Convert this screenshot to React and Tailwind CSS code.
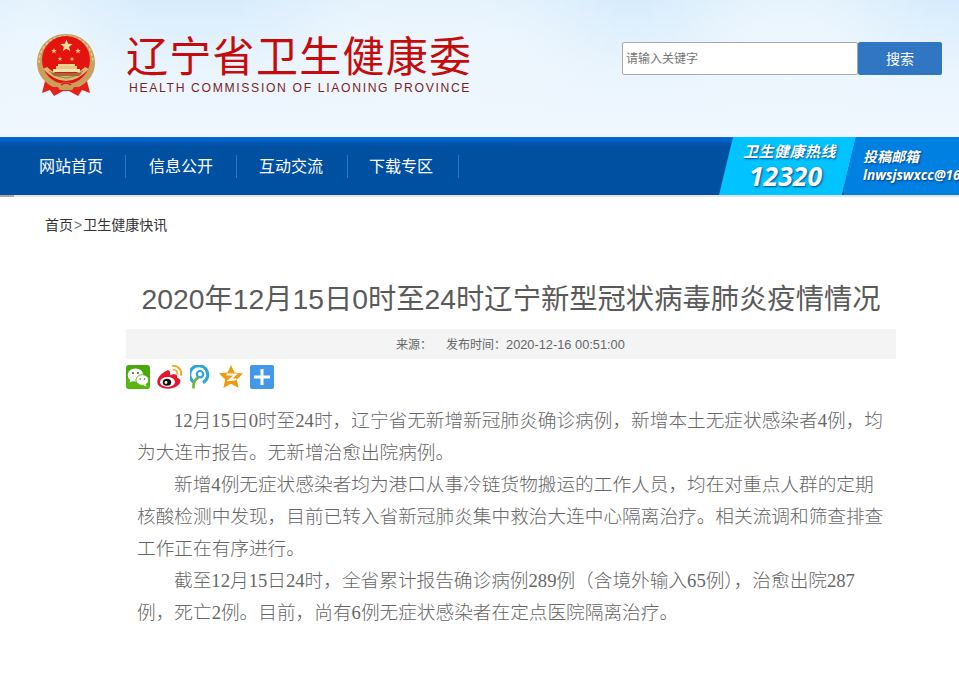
import React from 'react'

const sans = 'font-["Liberation_Sans","Noto_Sans_CJK_SC",sans-serif]'

const navItems = [
  { label: '网站首页', pad: 'pl-[24px]' },
  { label: '信息公开', pad: 'pl-[23px]' },
  { label: '互动交流', pad: 'pl-[22px]' },
  { label: '下载专区', pad: 'pl-[21px]' },
]

const paragraphs = [
  '12月15日0时至24时，辽宁省无新增新冠肺炎确诊病例，新增本土无症状感染者4例，均为大连市报告。无新增治愈出院病例。',
  '新增4例无症状感染者均为港口从事冷链货物搬运的工作人员，均在对重点人群的定期核酸检测中发现，目前已转入省新冠肺炎集中救治大连中心隔离治疗。相关流调和筛查排查工作正在有序进行。',
  '截至12月15日24时，全省累计报告确诊病例289例（含境外输入65例），治愈出院287例，死亡2例。目前，尚有6例无症状感染者在定点医院隔离治疗。',
]

function Star({ x, y, r, fill = '#f4dc9a' }) {
  const pts = []
  for (let i = 0; i < 10; i++) {
    const rad = i % 2 === 0 ? r : r * 0.42
    const a = -Math.PI / 2 + (i * Math.PI) / 5
    pts.push(`${x + rad * Math.cos(a)},${y + rad * Math.sin(a)}`)
  }
  return <polygon points={pts.join(' ')} fill={fill} />
}

function Emblem() {
  return (
    <svg width="58" height="64" viewBox="0 0 58 64" className="shrink-0">
      <path d="M9 44 L5 60 L13 57 L17 63 L26 58 L32 58 L41 63 L45 57 L53 60 L49 44 Z" fill="#e3201a" />
      <path d="M0 30 C0 14 12 1 29 1 C46 1 58 14 58 30 C58 42 50 50 42 54 L16 54 C8 50 0 42 0 30 Z" fill="#c8a05c" />
      <path d="M2 30 C2 15 13 3 29 3 C45 3 56 15 56 30" fill="none" stroke="#e6cf9a" strokeWidth="1.4" strokeDasharray="3 2" />
      <circle cx="29" cy="27" r="24" fill="#e3130f" />
      <path d="M6 36 Q29 60 52 36 L48 34 Q29 52 10 34 Z" fill="#dcb877" />
      <path d="M12 38 Q29 52 46 38" fill="none" stroke="#8f6a35" strokeWidth="0.8" />
      <Star x={29.5} y={13} r={6.5} />
      <Star x={17} y={18} r={3} fill="#ecc987" />
      <Star x={41} y={18} r={3} fill="#ecc987" />
      <Star x={23} y={26} r={2.4} fill="#ecc987" />
      <Star x={35} y={26} r={2.4} fill="#ecc987" />
      <rect x="21" y="31" width="17" height="2" fill="#f0d48c" />
      <rect x="19" y="33" width="21" height="3" fill="#e8c684" />
      <rect x="16" y="36" width="27" height="3" fill="#f4e0b0" />
      <path d="M14 40 L45 40 L42 43 L17 43 Z" fill="#9a6d32" />
      <path d="M20 53 Q29 45 38 53 L35 57 L23 57 Z" fill="#c8a05c" />
      <path d="M24 52 Q29 48 34 52" fill="none" stroke="#e3130f" strokeWidth="1.6" />
    </svg>
  )
}

function WechatIcon() {
  return (
    <svg width="24" height="24" viewBox="0 0 24 24">
      <rect width="24" height="24" rx="3" fill="#4aa80c" />
      <rect x="0.5" y="12" width="23" height="11.5" rx="3" fill="#58b811" />
      <ellipse cx="9.5" cy="10" rx="7.8" ry="6.6" fill="#fff" />
      <path d="M4.5 14 L3.5 17.5 L8 15.5 Z" fill="#fff" />
      <ellipse cx="16.3" cy="15" rx="6.4" ry="5.3" fill="#fff" stroke="#4aa80c" strokeWidth="0.8" />
      <path d="M19.5 19 L20.5 21.5 L17 20 Z" fill="#fff" />
      <circle cx="7" cy="8" r="1" fill="#2f6a08" />
      <circle cx="12" cy="8" r="1" fill="#2f6a08" />
      <circle cx="14.2" cy="14" r="0.8" fill="#2f6a08" />
      <circle cx="18.4" cy="14" r="0.8" fill="#2f6a08" />
    </svg>
  )
}

function WeiboIcon() {
  return (
    <svg width="25" height="24" viewBox="0 0 25 24">
      <path d="M10 5.5 C4.5 8 0.3 12.5 0.3 17 C0.3 21 5 23.7 11 23.7 C18 23.7 23.5 19.5 23.5 16 C23.5 14 21 13.2 20 13 C20.8 10.5 19.5 8.8 16 9.3 L13 10.3 C13.6 6.5 12.5 4.5 10 5.5 Z" fill="#e6162d" />
      <ellipse cx="10.5" cy="17" rx="7.5" ry="5" fill="#fff" />
      <ellipse cx="10" cy="17.2" rx="4.2" ry="3.5" fill="#111" />
      <circle cx="9" cy="17.5" r="1.4" fill="#fff" />
      <path d="M16 0.8 C21.5 0.5 25 5.5 24 10" fill="none" stroke="#f5a623" strokeWidth="1.9" strokeLinecap="round" />
      <path d="M16.5 4.8 C19 4.5 21 7 20.4 9.5" fill="none" stroke="#f5a623" strokeWidth="1.7" strokeLinecap="round" />
    </svg>
  )
}

function PengyouIcon() {
  return (
    <svg width="20" height="24" viewBox="0 0 20 24">
      <path d="M3.5 17 A9 9 0 1 1 13 17.6" fill="none" stroke="#2aa6de" strokeWidth="3" />
      <circle cx="10" cy="9.2" r="3.2" fill="none" stroke="#2aa6de" strokeWidth="2.2" />
      <path d="M3.5 23.5 C3 18 5 14 8.5 12.5" fill="none" stroke="#6cb33f" strokeWidth="2.6" />
    </svg>
  )
}

function QzoneIcon() {
  return (
    <svg width="24" height="24" viewBox="0 0 24 24">
      <path d="M12 0 L15.4 7.6 L24 8.6 L17.8 14.4 L19.6 23 L12 18.8 L4.4 23 L6.2 14.4 L0 8.6 L8.6 7.6 Z" fill="#f09a10" />
      <path d="M7.5 9.6 L16.5 9.6 L10.5 15 L17.5 14.2" fill="none" stroke="#fff" strokeWidth="2" />
    </svg>
  )
}

function PlusIcon() {
  return (
    <svg width="24" height="24" viewBox="0 0 24 24">
      <rect width="24" height="24" rx="2" fill="#4398ea" />
      <rect x="4" y="10.5" width="7" height="3" fill="#fff" />
      <rect x="13" y="10.5" width="7" height="3" fill="#fff" />
      <rect x="10.5" y="4" width="3" height="16" fill="#fff" />
    </svg>
  )
}

export default function App() {
  return (
    <div className={`w-[959px] h-[676px] overflow-hidden bg-white ${sans}`}>
      {/* top banner with clouds */}
      <header className="relative h-[137px] overflow-hidden bg-gradient-to-b from-[#d6ecfc] via-[#e9f4fd] to-[#f1f8ff]">
        <div className="absolute -top-10 left-[-30px] w-[130px] h-[120px] rounded-full bg-white/50 blur-2xl" />
        <div className="absolute -top-6 left-[280px] w-[300px] h-[90px] rounded-full bg-white/50 blur-2xl" />
        <div className="absolute top-[-20px] right-[70px] w-[200px] h-[80px] rounded-full bg-white/60 blur-2xl" />
        <div className="relative flex h-full items-start">
          <div className="ml-[37px] mt-[33px]">
            <Emblem />
          </div>
          <div className="ml-[31px] mt-[29px] w-[346px]">
            <div className='font-["Noto_Sans_CJK_SC",sans-serif] text-[42px] leading-[50px] tracking-[1.3px] text-[#c50c0c] whitespace-nowrap'>
              辽宁省卫生健康委
            </div>
            <div className="ml-[3px] mt-[2px] text-[12.2px] leading-[14px] tracking-[1.65px] text-[#7b1f1f] whitespace-nowrap">
              HEALTH COMMISSION OF LIAONING PROVINCE
            </div>
          </div>
          <div className="ml-[150px] mt-[42px] flex h-[33px]">
            <input
              readOnly
              placeholder="请输入关键字"
              className="w-[236px] h-[33px] border border-[#aaaaaa] rounded-[2px] bg-white pl-[3px] text-xs placeholder-[#757575] outline-none"
            />
            <button className="w-[84px] h-[33px] rounded-[2px] bg-[#3176c2] text-sm text-white">搜索</button>
          </div>
        </div>
      </header>

      {/* main nav */}
      <nav className="flex h-[58px] bg-gradient-to-b from-[#0669da] via-[#0050a2] via-[16%] to-[#0050a2]">
        <ul className="flex items-center pl-[15px]">
          {navItems.map((item) => (
            <li key={item.label} className={`w-[111px] h-[23px] border-r border-[#2a76d6] text-base leading-[23px] text-white ${item.pad}`}>
              {item.label}
            </li>
          ))}
        </ul>
        <div className="ml-auto flex w-[240px] overflow-hidden italic font-bold text-white [text-shadow:1px_1px_2px_rgba(0,40,110,0.8)]">
          <div className="w-[137px] shrink-0 bg-[#00c3ff] [clip-path:polygon(14px_0,137px_0,123px_100%,0_100%)] pl-[24px] pt-[5px]">
            <div className="text-[15px] leading-[20px] tracking-[0.5px] whitespace-nowrap">卫生健康热线</div>
            <div className='font-["Open_Sans",sans-serif] ml-[6px] text-[26.5px] leading-[28px]'>12320</div>
          </div>
          <div className="ml-[-14px] flex-1 shrink-0 bg-[#0080e0] [clip-path:polygon(14px_0,100%_0,100%_100%,0_100%)] pl-[19px] pt-[10px] border-l-[2px] border-[#0058b0]">
            <div className="text-sm leading-[20px]">投稿邮箱</div>
            <div className='font-["Open_Sans",sans-serif] text-[13.6px] leading-[15px] whitespace-nowrap'>lnwsjswxcc@163.com</div>
          </div>
        </div>
      </nav>
      <div className="h-[2px] bg-[#e4e4e4]">
        <div className="w-[14px] h-[2px] bg-[#a8a8a8]" />
      </div>

      {/* breadcrumb */}
      <div className="ml-[45px] mt-[18px] text-sm leading-[20px] text-[#333]">
        首页<span className="mx-[1px] text-[#777]">&gt;</span>卫生健康快讯
      </div>

      {/* article */}
      <main className="ml-[126px] mt-[46px] w-[770px]">
        <h1 className="text-center text-[28.3px] leading-[36px] text-[#5a5a5a]">
          2020年12月15日0时至24时辽宁新型冠状病毒肺炎疫情情况
        </h1>
        <div className="mt-[12px] flex h-[30px] items-center bg-[#f4f4f4] pl-[270px] pt-[1px] text-xs text-[#666]">
          <span className="w-[50px]">来源：</span>
          <span>
            发布时间：<span className="text-[12.8px]">2020-12-16 00:51:00</span>
          </span>
        </div>
        <div className="mt-[6px] flex items-center h-[24px] gap-[7px]">
          <WechatIcon />
          <WeiboIcon />
          <div className="ml-[1px] mr-[2px]">
            <PengyouIcon />
          </div>
          <QzoneIcon />
          <PlusIcon />
        </div>
        <div className='mt-[16px] px-[11px] font-["Liberation_Serif","Noto_Sans_CJK_SC",serif] font-light text-[18.67px] leading-[32px] text-[#666]'>
          {paragraphs.map((text) => (
            <p key={text} className="indent-[37px]">
              {text}
            </p>
          ))}
        </div>
      </main>
    </div>
  )
}
